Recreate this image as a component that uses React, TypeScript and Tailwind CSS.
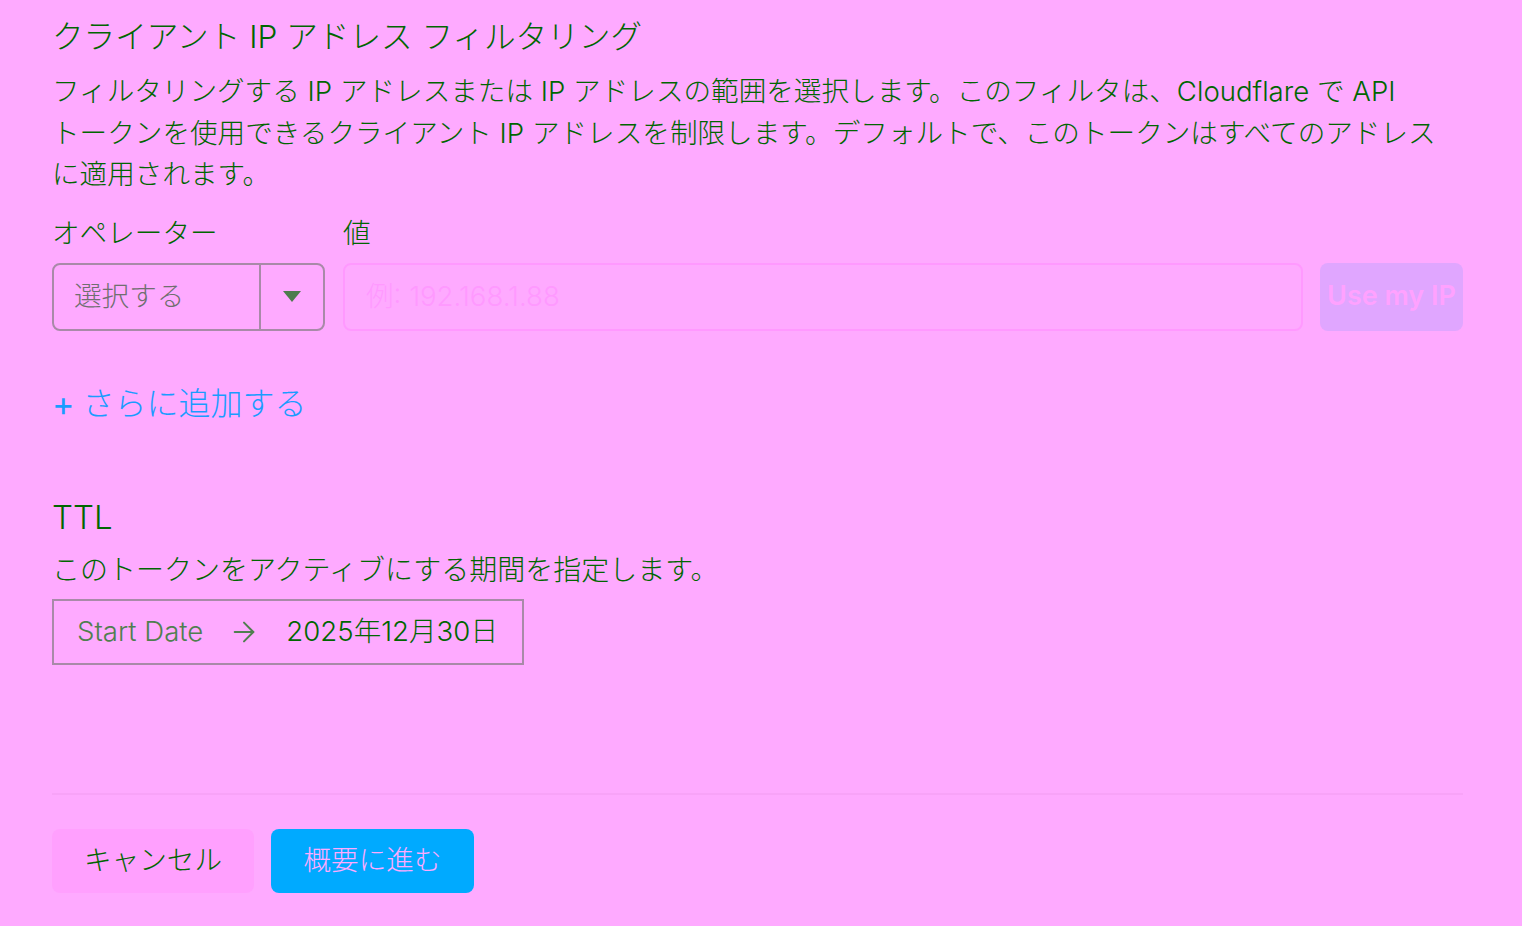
import { ArrowRight } from "lucide-react";

const font = "font-['Inter','Noto_Sans_CJK_JP',sans-serif]";

export default function App() {
  return (
    <div className={`min-h-[926px] w-full bg-[#feaaff] pl-[52px] pr-[59px] pt-[17px] text-[#006600] font-light ${font}`}>
      <h2 className="text-[31.6px] leading-[40px]">クライアント IP アドレス フィルタリング</h2>
      <p className="mt-[14px] text-[27.6px] leading-[41.5px]">
        フィルタリングする IP アドレスまたは IP アドレスの範囲を選択します。このフィルタは、Cloudflare で API
        <br />
        トークンを使用できるクライアント IP アドレスを制限します。デフォルトで、このトークンはすべてのアドレス
        <br />
        に適用されます。
      </p>

      <div className="mt-[18px] flex">
        <div className="w-[291px] shrink-0">
          <div className="text-[27.6px] leading-[38px]">オペレーター</div>
          <div className="mt-[11px] flex h-[68px] w-[273px] rounded-lg border-2 border-[#a88aa8]">
            <div className="flex flex-1 items-center pl-[20px] text-[27.6px] text-[#6f6f6f]">選択する</div>
            <div className="flex w-[64px] items-center justify-center border-l-2 border-[#a88aa8]">
              <svg width="18" height="12" viewBox="0 0 18 12">
                <path d="M0 0h18L9 11z" fill="#4d7c4d" />
              </svg>
            </div>
          </div>
        </div>
        <div className="flex-1">
          <div className="text-[27.6px] leading-[38px]">値</div>
          <div className="mt-[11px] flex gap-[17px]">
            <div className="flex h-[68px] flex-1 items-center rounded-lg border-2 border-[#ff99ff] pl-[21px] text-[27.6px] text-[#ff99ff]">
              例: 192.168.1.88
            </div>
            <button className="h-[68px] w-[143px] rounded-lg bg-[#e0a6ff] text-[27px] font-semibold text-[#ffa2ff]">
              Use my IP
            </button>
          </div>
        </div>
      </div>

      <div className="mt-[53px] flex items-center text-[32px] leading-[40px] text-[#1a9cff]">
        <span className="mr-[8px] text-[34px] font-normal leading-[40px]">+</span>
        <span>さらに追加する</span>
      </div>

      <h2 className="mt-[71px] text-[33px] leading-[44px]">TTL</h2>
      <p className="mt-[11px] text-[28px] leading-[40px]">このトークンをアクティブにする期間を指定します。</p>
      <div className="mt-[9px] flex h-[66px] w-[472px] items-center border-2 border-[#a88aa8] pl-[23px] text-[27.6px]">
        <span className="text-[#4f7f4f]">Start Date</span>
        <ArrowRight className="ml-[25px] mr-[26px] h-[32px] w-[32px] text-[#4f7f4f]" strokeWidth={1.5} />
        <span>2025年12月30日</span>
      </div>

      <div className="mt-[128px] h-[2px] bg-[#f8a3f8]" />

      <div className="mt-[34px] flex gap-[17px]">
        <button className="h-[64px] w-[202px] rounded-lg bg-[#ffa0fe] text-[27.6px] text-[#006600]">キャンセル</button>
        <button className="h-[64px] w-[203px] rounded-lg bg-[#00aaff] text-[27.6px] text-[#ffaaff]">概要に進む</button>
      </div>
    </div>
  );
}
